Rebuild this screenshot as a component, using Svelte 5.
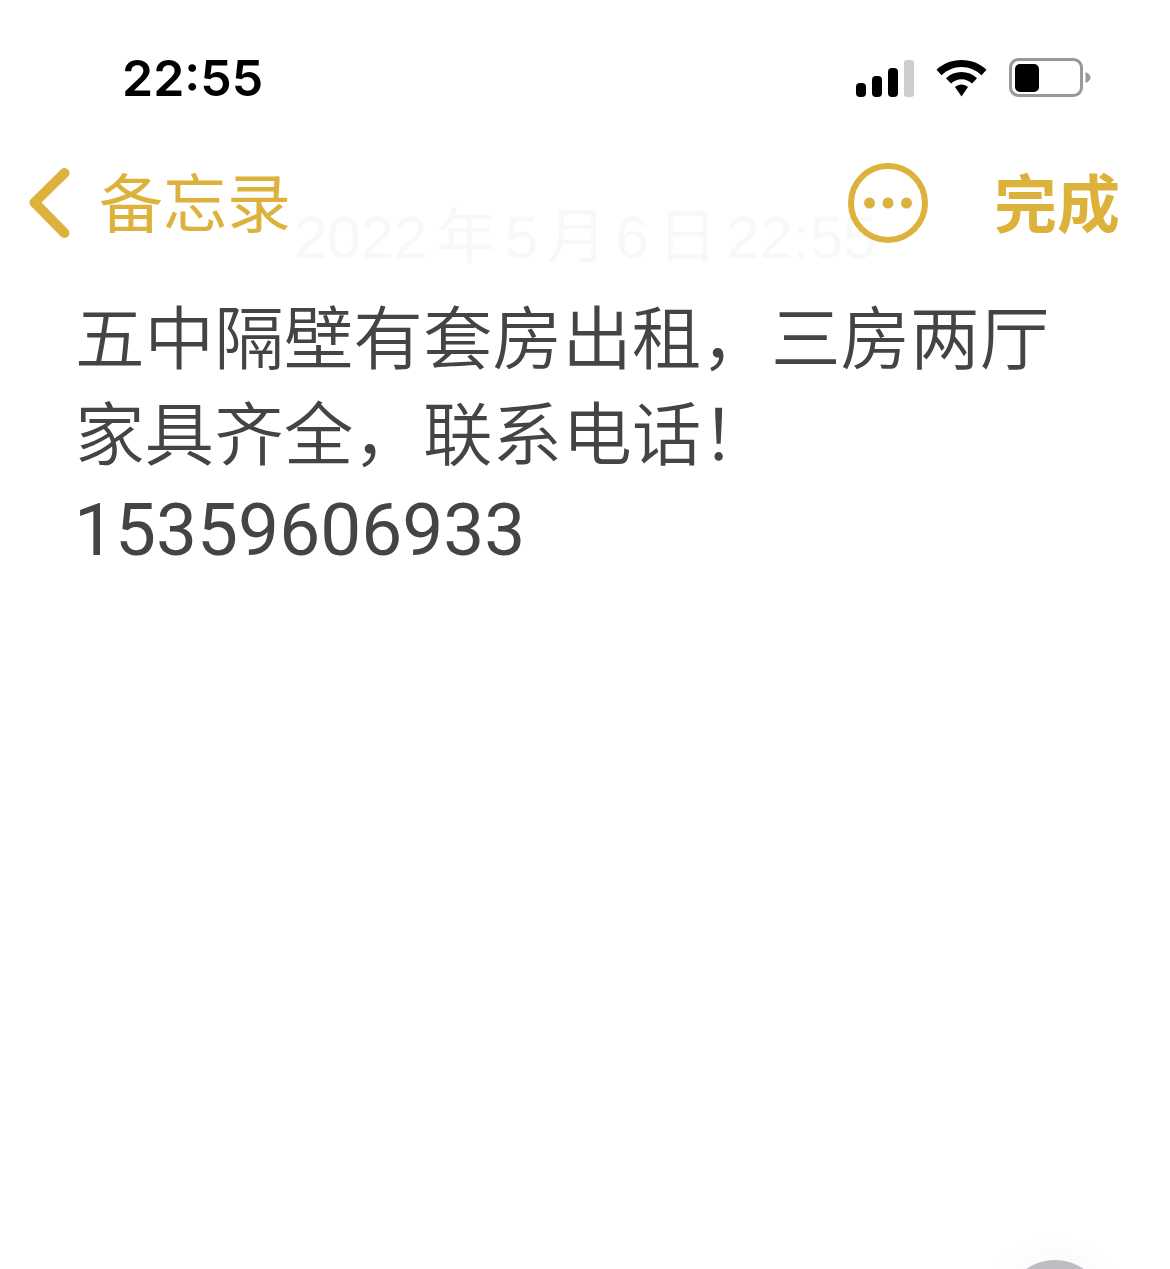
<script lang="ts">
	const lines = ['五中隔壁有套房出租，三房两厅', '家具齐全，联系电话！'];
	const phone = '15359606933';
</script>

<div class="screen">
	<header class="status">
		<span class="status__time">22:55</span>
		<div class="status__icons">
			<svg class="signal" width="58" height="38" viewBox="0 0 58 38" aria-hidden="true">
				<rect x="0" y="24" width="10" height="14" rx="4" fill="#000" />
				<rect x="16" y="17" width="10" height="21" rx="4" fill="#000" />
				<rect x="32" y="9" width="10" height="29" rx="4" fill="#000" />
				<rect x="48" y="1" width="10" height="37" rx="3" fill="#cdcdcd" />
			</svg>
			<svg class="wifi" width="51" height="38" viewBox="1 0 51 38" aria-hidden="true">
				<path d="M26.500 1C16.500 1 8 4.600 1.500 10.800L6.500 16.200C11.800 11.300 18.800 8 26.500 8S41.200 11.300 46.500 16.200L51.500 10.800C45 4.600 36.500 1 26.500 1Z" fill="#000" />
				<path d="M26.500 13C20.500 13 15.200 15.200 11 19.200L16 24.500C18.800 22 22.400 20.300 26.500 20.300S34.200 22 37 24.500L42 19.200C37.800 15.200 32.500 13 26.500 13Z" fill="#000" />
				<path d="M26.500 25.500C24 25.500 21.800 26.400 20 28L26.500 37.500L33 28C31.200 26.400 29 25.500 26.500 25.500Z" fill="#000" />
			</svg>
			<svg class="battery" width="82" height="40" viewBox="0 0 82 40" aria-hidden="true">
				<rect x="1.500" y="1.500" width="71" height="36" rx="8" fill="none" stroke="#999" stroke-width="3" />
				<rect x="6" y="6" width="24" height="28" rx="5" fill="#000" />
				<path d="M76.500 14C79.500 15 81.500 17 81.500 19.500S79.500 24 76.500 25Z" fill="#999" />
			</svg>
		</div>
	</header>

	<nav class="nav">
		<svg class="nav__back" width="44" height="72" viewBox="0 0 44 72" aria-hidden="true">
			<path d="M36.500 6L6.500 35.500L36.500 66" fill="none" stroke="#ddb23c" stroke-width="10" stroke-linecap="round" stroke-linejoin="round" />
		</svg>
		<span class="nav__title">备忘录</span>
		<span class="nav__date">2022 年 5 月 6 日 22:55</span>
		<svg class="nav__more" width="80" height="80" viewBox="0 0 80 80" aria-hidden="true">
			<circle cx="40" cy="40" r="37" fill="none" stroke="#ddb23c" stroke-width="6" />
			<circle cx="21.500" cy="40" r="5.500" fill="#ddb23c" />
			<circle cx="40" cy="40" r="5.500" fill="#ddb23c" />
			<circle cx="58.500" cy="40" r="5.500" fill="#ddb23c" />
		</svg>
		<span class="nav__done">完成</span>
	</nav>

	<main class="note">
		{#each lines as line}
			<p class="note__line">{line}</p>
		{/each}
		<p class="note__line note__line--phone">{phone}</p>
	</main>

	<div class="scroll-btn"></div>
</div>

<style>
	:global(body) {
		margin: 0;
		background: #fff;
	}

	.screen {
		position: relative;
		height: 1269px;
		overflow: hidden;
		background: #fff;
		font-family: 'Liberation Sans', 'Noto Sans CJK SC', sans-serif;
	}

	.status {
		display: flex;
		align-items: center;
		justify-content: space-between;
		padding: 48px 79px 0 122px;
		height: 60px;
	}

	.status__time {
		color: #000;
		font-family: Inter, sans-serif;
		font-weight: 600;
		font-size: 50px;
		line-height: 62px;
	}

	.status__icons {
		display: flex;
		align-items: center;
		gap: 22px;
		margin-top: -1px;
	}

	.nav {
		position: relative;
		display: flex;
		align-items: center;
		margin-top: 55px;
		padding: 0 50px 0 28px;
		height: 80px;
		color: #ddb23c;
	}

	.nav__title {
		margin-left: 27px;
		margin-top: -8px;
		font-family: 'Noto Sans CJK SC', sans-serif;
		font-weight: 400;
		font-size: 64px;
		line-height: 80px;
	}

	.nav__date {
		position: absolute;
		top: 40px;
		left: 294px;
		color: #f8f8f8;
		font-family: 'Liberation Sans', 'Noto Sans CJK SC', sans-serif;
		font-size: 60px;
		line-height: 70px;
		word-spacing: -8px;
		white-space: nowrap;
	}

	.nav__more {
		position: relative;
		margin-left: auto;
	}

	.nav__done {
		margin-left: 66px;
		margin-top: -6px;
		font-family: 'Noto Sans CJK SC', sans-serif;
		font-weight: 700;
		font-size: 63px;
		line-height: 80px;
	}

	.note {
		padding: 43px 0 0 75px;
		color: #444;
		font-family: 'Noto Sans CJK SC', sans-serif;
		font-weight: 350;
		font-size: 69.600px;
		line-height: 96px;
	}

	.note__line {
		margin: 0;
		white-space: nowrap;
	}

	.note__line--phone {
		margin-top: 4px;
		margin-left: -1px;
		font-family: Roboto, sans-serif;
		font-weight: 400;
		font-size: 73px;
	}

	.scroll-btn {
		position: absolute;
		top: 1260px;
		left: 1005px;
		width: 100px;
		height: 100px;
		border-radius: 50%;
		background: #bbbdc3;
		box-shadow: 0 0 40px rgba(0, 0, 0, 0.04);
	}
</style>
